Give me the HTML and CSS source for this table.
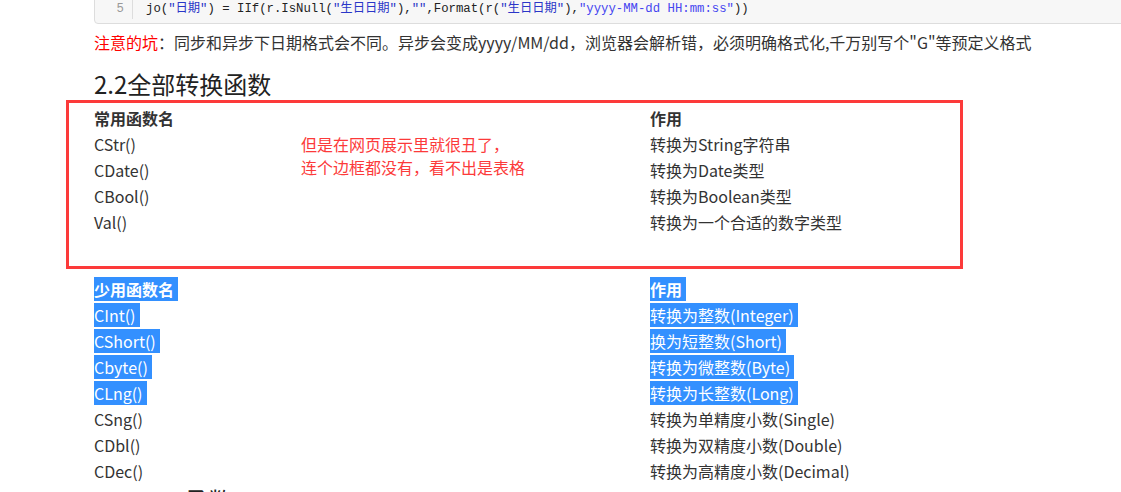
FILE: index.html
```html
<!DOCTYPE html>
<html lang="zh-CN">
<head>
    <meta charset="UTF-8">
    <meta name="viewport" content="width=device-width, initial-scale=1.0">
    <title>转换函数</title>
    <link rel="stylesheet" href="styles.css">
</head>
<body>

<div class="page">
    <div class="code">
        <span class="gutter">5</span>
        <code>jo(<span class="str">"日期"</span>) = IIf(r.IsNull(<span class="str">"生日日期"</span>),<span class="str">""</span>,Format(r(<span class="str">"生日日期"</span>),<span class="str fmt">"yyyy-MM-dd HH:mm:ss"</span>))</code>
    </div>

    <p class="note"><span class="warn">注意的坑</span>：同步和异步下日期格式会不同。异步会变成yyyy/MM/dd，浏览器会解析错，必须明确格式化,千万别写个"G"等预定义格式</p>

    <h2>2.2全部转换函数</h2>

    <div class="boxed">
        <table class="fn-table first">
            <tr><th>常用函数名</th><th>作用</th></tr>
            <tr><td>CStr()</td><td>转换为String字符串</td></tr>
            <tr><td>CDate()</td><td>转换为Date类型</td></tr>
            <tr><td>CBool()</td><td>转换为Boolean类型</td></tr>
            <tr><td>Val()</td><td>转换为一个合适的数字类型</td></tr>
        </table>
        <div class="mark-box"></div>
        <p class="mark-text">但是在网页展示里就很丑了，<br>连个边框都没有，看不出是表格</p>
    </div>

    <table class="fn-table">
        <tr><th><span class="sel">少用函数名</span></th><th><span class="sel">作用</span></th></tr>
        <tr><td><span class="sel">CInt()</span></td><td><span class="sel">转换为整数(Integer)</span></td></tr>
        <tr><td><span class="sel">CShort()</span></td><td><span class="sel">换为短整数(Short)</span></td></tr>
        <tr><td><span class="sel">Cbyte()</span></td><td><span class="sel">转换为微整数(Byte)</span></td></tr>
        <tr><td><span class="sel">CLng()</span></td><td><span class="sel">转换为长整数(Long)</span></td></tr>
        <tr><td>CSng()</td><td>转换为单精度小数(Single)</td></tr>
        <tr><td>CDbl()</td><td>转换为双精度小数(Double)</td></tr>
        <tr><td>CDec()</td><td>转换为高精度小数(Decimal)</td></tr>
    </table>

    <h2 class="next">2.3 Date函数</h2>
</div>

</body>
</html>
```

FILE: styles.css
```css
body {
    margin: 0;
    font-family: "Noto Sans CJK SC", "Noto Sans", sans-serif;
    color: #333;
    background-color: #fff;
    overflow: hidden;
}
.page {
    margin-left: 94px;
    width: 1112px;
}

/* code block, scrolled so only its last line shows */
.code {
    display: flex;
    margin-top: -14px;
    padding: 12px 0 4px;
    background-color: #f7f7f7;
    border: 1px solid #ddd;
    border-radius: 4px;
    font-family: "Liberation Mono", "Noto Sans CJK SC", monospace;
    font-size: 12.3px;
    line-height: 20px;
}
.gutter {
    width: 29px;
    padding-right: 8px;
    text-align: right;
    color: #999;
    border-right: 1px solid #ddd;
}
.code code {
    padding-left: 13px;
    font-family: inherit;
    color: #222;
    white-space: pre;
}
.str {
    color: #2a36c8;
}
.fmt {
    color: #4646f0;
}

.note {
    margin: 6px 0 0;
    font-size: 16px;
    line-height: 24px;
}
.warn {
    color: #f00;
}

h2 {
    margin: 14px 0 5px;
    font-size: 24px;
    line-height: 32px;
    font-weight: 400;
    color: #222;
}

.fn-table {
    width: 100%;
    table-layout: fixed;
    border-collapse: collapse;
    font-size: 16px;
}
.fn-table th, .fn-table td {
    padding: 1px 0;
    line-height: 24px;
    text-align: left;
    vertical-align: top;
}
.fn-table th {
    font-weight: 700;
}
.fn-table.first {
    margin-bottom: 41px;
}
.sel {
    display: inline-block;
    padding-right: 4px;
    background-color: #3390ff;
    color: #fff;
}

/* red annotation drawn over the first table */
.boxed {
    position: relative;
}
.mark-box {
    position: absolute;
    left: -28px;
    top: -5px;
    width: 897px;
    height: 169px;
    box-sizing: border-box;
    border: 3px solid #fc3a3a;
}
.mark-text {
    position: absolute;
    left: 207px;
    top: 28px;
    margin: 0;
    font-size: 16px;
    line-height: 23px;
    color: #fc3a3a;
}

h2.next {
    margin-top: 0;
}
```
